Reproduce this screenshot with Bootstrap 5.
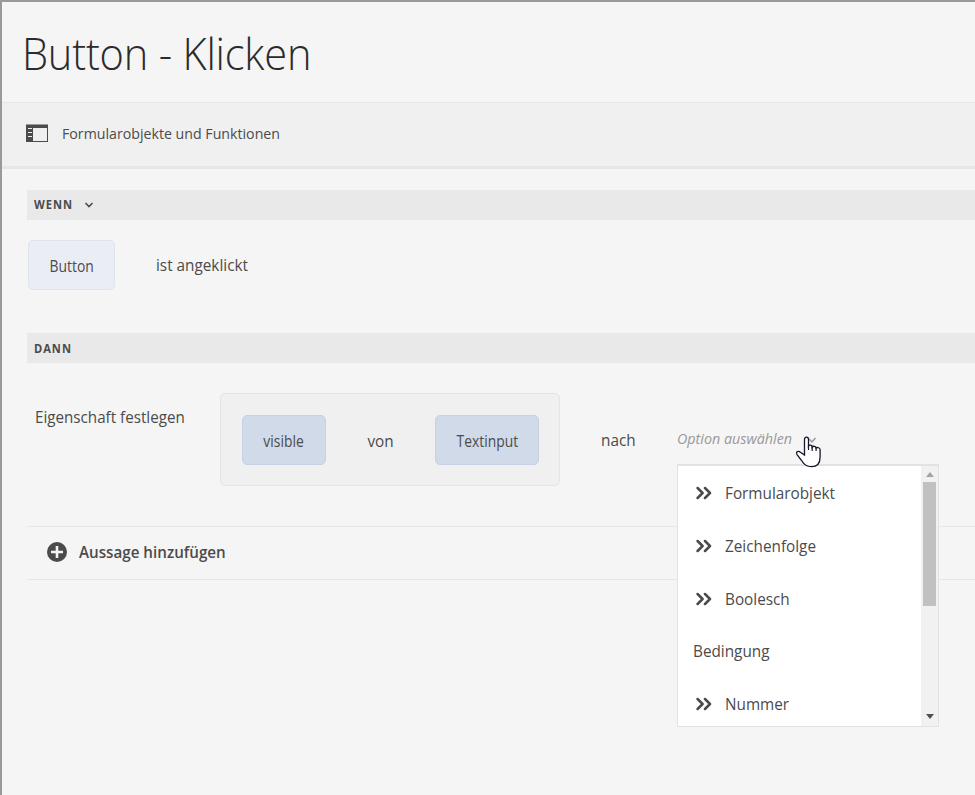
<!DOCTYPE html>
<html lang="de">
<head>
<meta charset="utf-8">
<meta name="viewport" content="width=device-width, initial-scale=1">
<title>Button - Klicken</title>
<link href="https://cdn.jsdelivr.net/npm/bootstrap@5.3.0/dist/css/bootstrap.min.css" rel="stylesheet">
<style>
html,body{height:100%}
body{font-family:"Open Sans","Noto Sans",sans-serif;color:#4b4b4b;background:#f5f5f5;font-size:17px;line-height:24px;overflow:hidden}
.editor{height:795px;border-left:2px solid #999;border-top:2px solid #999}
.editor-head{height:101px;padding:24px 0 0 20px;border-bottom:1px solid #e7e7e7}
.editor-title{font-size:43.5px;line-height:55px;font-weight:300;color:#2b2b2b;letter-spacing:-.2px}
.tools{height:66px;padding-left:24px;background:#f0f0f0;border-bottom:3px solid #e6e6e6;font-size:15px}
.tools svg{margin-right:14px}
.rule-body{padding:21px 0 0 25px}
.band{height:30px;padding-left:7px;background:#e9e9e9;font-size:12.5px;font-weight:700;letter-spacing:1.1px}
.chip{height:50px;border:1px solid #c6d2e4;border-radius:5px;background:#d0dae8;font-size:15.5px;padding-top:3px}
.chip-pale{background:#eaedf3;border-color:#dfe3eb;width:87px}
.chip-a{width:84px}
.chip-b{width:104px}
.when-row{padding:20px 0 0 1px;height:113px}
.then-row{height:163px;padding:30px 0 0 8px}
.setter{width:340px;height:93px;border:1px solid #e4e4e4;border-radius:5px;background:#f0f0f0;padding:0 20px 0 21px}
.lbl-set{width:185px;padding-top:12px;white-space:nowrap}
.lbl-click{margin-left:41px;padding-top:13px}
.lbl-to{margin-left:41px;width:34px;padding-top:35px}
.chooser{width:262px;margin-left:42px;padding-top:33px}
.placeholder-text{font-size:15px;font-style:italic;color:#999;height:24px}
.options{top:71px;left:0;width:262px;height:263px;background:#fff;border:1px solid #e2e2e2;border-top-width:2px}
.options li{height:52.75px}
.options li svg{margin:0 13px 0 3px}
.opts-list{padding-left:15px;padding-top:1px}
.track{width:17px;background:#f1f1f1;padding:6px 0 7px}
.thumb{width:13px;height:124px;background:#c1c1c1;margin-top:5px}
.hand{left:119px;top:42px}
.add-row{height:54px;border-top:1px solid #e7e7e7;border-bottom:1px solid #e7e7e7;padding-left:20px;font-weight:600}
.add-row svg{margin-right:12px}
/* condensed lettering */
.cond,.cond-mid,.cond-light,.cond-title{display:inline-block;transform-origin:left center;white-space:nowrap}
.cond{transform:scaleX(.9)}
.lbl-set .cond,.add-row .cond{transform:scaleX(.893)}
.cond-mid{transform:scaleX(.945)}
.cond-light{transform:scaleX(.955)}
.cond-title{transform:scaleX(.955)}
.chip .cond,.setter .cond{transform-origin:center}
.chip .cond{transform:scaleX(.895)}
.band .cond-mid{transform:scaleX(.89)}
.up-1{margin-top:-2px}
.up-2{margin-top:-4px}
.down-1{margin-top:2px}
</style>
<script src="https://cdn.jsdelivr.net/npm/bootstrap@5.3.0/dist/js/bootstrap.bundle.min.js"></script>
</head>
<body>
<svg class="d-none"><symbol id="chev" viewBox="0 0 16 14"><path d="M1.600 2 6.600 7l-5 5M9 2l5 5-5 5" fill="none" stroke="#4b4b4b" stroke-width="2.500" stroke-linecap="round" stroke-linejoin="round"/></symbol></svg>
<main class="editor">
  <header class="editor-head"><h1 class="editor-title m-0"><span class="cond-title">Button - Klicken</span></h1></header>
  <div class="tools d-flex align-items-center">
    <svg class="up-2" width="22" height="18" viewBox="0 0 22 18"><path fill="#4b4b4b" d="M0 0h22v18H0z"/><path fill="#999" d="M0 0h22v1H0z"/><path fill="#f0f0f0" d="M7 4h14v13H7zM2 4h4v1H2zM2 8h4v1H2zM2 12h4v1H2z"/></svg>
    <span class="cond-mid up-2">Formularobjekte und Funktionen</span>
  </div>
  <div class="rule-body">
    <div class="band d-flex align-items-center"><span class="cond-mid">WENN</span><svg class="ms-1" width="12" height="8" viewBox="-2 0 12 8"><path d="m1.500 2 3.500 3.500L8.500 2" fill="none" stroke="#4b4b4b" stroke-width="1.600"/></svg></div>
    <div class="when-row d-flex align-items-start">
      <div class="chip chip-pale d-flex align-items-center justify-content-center"><span class="cond up-1">Button</span></div>
      <div class="lbl-click"><span class="cond">ist angeklickt</span></div>
    </div>
    <div class="band d-flex align-items-center"><span class="cond-mid down-1">DANN</span></div>
    <div class="then-row d-flex align-items-start">
      <div class="lbl-set"><span class="cond">Eigenschaft festlegen</span></div>
      <div class="setter d-flex align-items-center justify-content-between">
        <div class="chip chip-a d-flex align-items-center justify-content-center"><span class="cond">visible</span></div>
        <span class="cond down-1">von</span>
        <div class="chip chip-b d-flex align-items-center justify-content-center"><span class="cond">Textinput</span></div>
      </div>
      <div class="lbl-to"><span class="cond">nach</span></div>
      <div class="chooser position-relative">
        <div class="placeholder-text d-flex align-items-center"><span class="cond-light">Option auswählen</span></div>
        <div class="options position-absolute d-flex">
          <ul class="opts-list list-unstyled m-0 flex-grow-1">
            <li class="d-flex align-items-center"><svg width="16" height="14"><use href="#chev"/></svg><span class="cond">Formularobjekt</span></li>
            <li class="d-flex align-items-center"><svg width="16" height="14"><use href="#chev"/></svg><span class="cond">Zeichenfolge</span></li>
            <li class="d-flex align-items-center"><svg width="16" height="14"><use href="#chev"/></svg><span class="cond">Boolesch</span></li>
            <li class="d-flex align-items-center"><span class="cond up-1">Bedingung</span></li>
            <li class="d-flex align-items-center"><svg width="16" height="14"><use href="#chev"/></svg><span class="cond">Nummer</span></li>
          </ul>
          <div class="track d-flex flex-column align-items-center">
            <svg width="8" height="5" viewBox="0 0 8 5"><path fill="#a3a3a3" d="M0 5h8L4 0z"/></svg>
            <div class="thumb"></div>
            <svg class="mt-auto" width="8" height="5" viewBox="0 0 8 5"><path fill="#505050" d="M0 0h8L4 5z"/></svg>
          </div>
        </div>
        <svg class="hand position-absolute" width="26" height="34" viewBox="0 0 26 34"><path d="m13 4 3 3 3.500-4" fill="none" stroke="#999" stroke-width="1.500"/><path d="M8.500 20V4.500c0-3.300 4-3.300 4 0V11c1-1.500 3.700-1 3.700 1 1-1.300 3.700-.8 3.900 1 1.200-1 4-.3 4 1.800V22c0 6-3 9.700-8.700 9.700-5 0-7.500-2.200-9.800-6.200L.9 19.300c-1.500-2.700 1.600-3.800 3.500-2.100z" fill="#fff" stroke="#15152b" stroke-width="1.300"/><path d="M12.500 10v5M16.200 11v5M20.100 12v4" fill="none" stroke="#15152b" stroke-width="1.200"/></svg>
      </div>
    </div>
    <div class="add-row d-flex align-items-center">
      <svg class="up-1" width="20" height="20" viewBox="0 0 20 20"><circle cx="10" cy="10" r="10" fill="#4b4b4b"/><path d="M10 4v12M4 10h12" stroke="#f5f5f5" stroke-width="2.600"/></svg>
      <span class="cond up-1">Aussage hinzufügen</span>
    </div>
  </div>
</main>
</body>
</html>
